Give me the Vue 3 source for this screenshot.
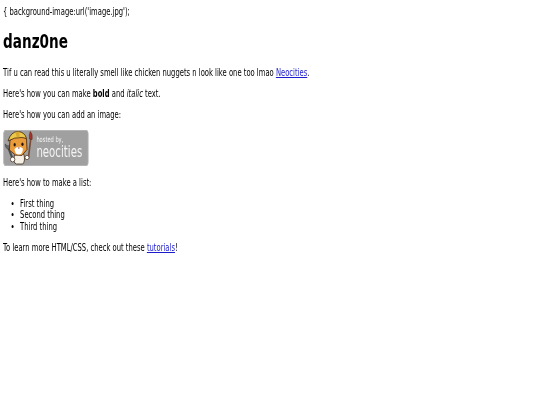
<template>
	<div class="page">
		<p class="css-line">{ background-image:url('image.jpg');</p>
		<h1 class="title">danz0ne</h1>
		<p>Tif u can read this u literally smell like chicken nuggets n look like one too lmao <a href="#">Neocities</a>.</p>
		<p>Here's how you can make <strong>bold</strong> and <em>italic</em> text.</p>
		<p>Here's how you can add an image:</p>
		<div class="badge">
			<svg class="cat" viewBox="0 0 36 36" preserveAspectRatio="none">
				<!-- paintbrush -->
				<path d="M29.5 9 L27 28" stroke="#7a4b34" stroke-width="1.8" fill="none" />
				<path d="M29 1.5 Q32 4 31 9.5 L28 9 Q27.5 5 29 1.5 Z" fill="#a8352b" stroke="#4a2218" stroke-width="0.5" />
				<!-- wrench -->
				<path d="M5 17 L10 29" stroke="#4c4c4c" stroke-width="2.2" fill="none" />
				<path d="M2 14 Q2 19 6 19 Q8 17 7.4 14 L5.6 16 L3.8 15.6 Z" fill="#6a6a6a" stroke="#333" stroke-width="0.5" />
				<!-- body and paws -->
				<path d="M12 25 Q10 33 14 34 L21 34 Q24 31 22 24 Z" fill="#f4f0e6" stroke="#3a2414" stroke-width="0.8" />
				<circle cx="10" cy="29.5" r="2.4" fill="#fff" stroke="#3a2414" stroke-width="0.7" />
				<circle cx="25.5" cy="27.5" r="2.2" fill="#fff" stroke="#3a2414" stroke-width="0.7" />
				<!-- head -->
				<path d="M7 11 L6.5 20 L13 25 L20 25.5 L25.5 19.5 L25 9 L19 5 L11 6 Z" fill="#ea9b3a" stroke="#4f2c10" stroke-width="0.9" />
				<path d="M12 19 Q16.5 15 21 18.5 Q21 24.5 16.5 24.5 Q12.5 24.5 12 19 Z" fill="#fff" />
				<!-- hard hat -->
				<path d="M5 11 Q8 1.5 16 1.5 Q23 2 25 8.5 L20 7.5 Q12 7 5 11 Z" fill="#ebc74a" stroke="#4f2c10" stroke-width="0.9" />
				<path d="M13 2 L14.5 7.2 L17.5 7.2 L17 1.6 Z" fill="#d5a92f" />
				<!-- face -->
				<ellipse cx="12.2" cy="14.8" rx="1.2" ry="1.7" fill="#22130a" />
				<ellipse cx="20.6" cy="14.2" rx="1.2" ry="1.7" fill="#22130a" />
				<path d="M15.4 17.6 L17.8 17.4 L16.7 19 Z" fill="#8a3a26" />
			</svg>
			<div class="badge-text">
				<span class="hosted">hosted by,</span>
				<span class="neo">neocities</span>
			</div>
		</div>
		<p>Here's how to make a list:</p>
		<ul>
			<li v-for="item in items" :key="item">{{ item }}</li>
		</ul>
		<p>To learn more HTML/CSS, check out these <a href="#">tutorials</a>!</p>
	</div>
</template>

<script setup>
const items = ['First thing', 'Second thing', 'Third thing']
</script>

<style>
html, body {
	background: #fff;
}
</style>

<style scoped>
/* the reference is squeezed sideways, so the page is laid out wider and scaled down */
.page {
	width: 794px;
	height: 405px;
	box-sizing: border-box;
	padding: 5.5px 4.5px 0;
	overflow: hidden;
	font-family: "DejaVu Sans", sans-serif;
	font-size: 10px;
	line-height: 11.5px;
	color: #000;
	transform: scaleX(0.68);
	transform-origin: 0 0;
	filter: blur(0.3px);
}

p {
	margin: 0 0 9.5px;
}

.css-line {
	margin-bottom: 0;
}

.title {
	margin: 12.5px 0 14px;
	font-size: 20px;
	line-height: 23px;
}

a {
	color: #1c1ccc;
}

.badge {
	width: 125px;
	height: 36px;
	margin: 0 0 11px;
	border-radius: 4px;
	background: #a0a0a0;
	box-shadow: inset 0 0 0 1px #b4b4b4;
	display: flex;
	align-items: center;
}

.cat {
	flex: none;
	width: 49px;
	height: 36px;
}

.badge-text {
	display: flex;
	flex-direction: column;
	color: #f4f4f4;
}

.hosted {
	font-size: 7.5px;
	line-height: 9px;
}

.neo {
	font-size: 15px;
	line-height: 16px;
}

ul {
	margin: 0 0 9.5px;
	padding-left: 25px;
}
</style>
